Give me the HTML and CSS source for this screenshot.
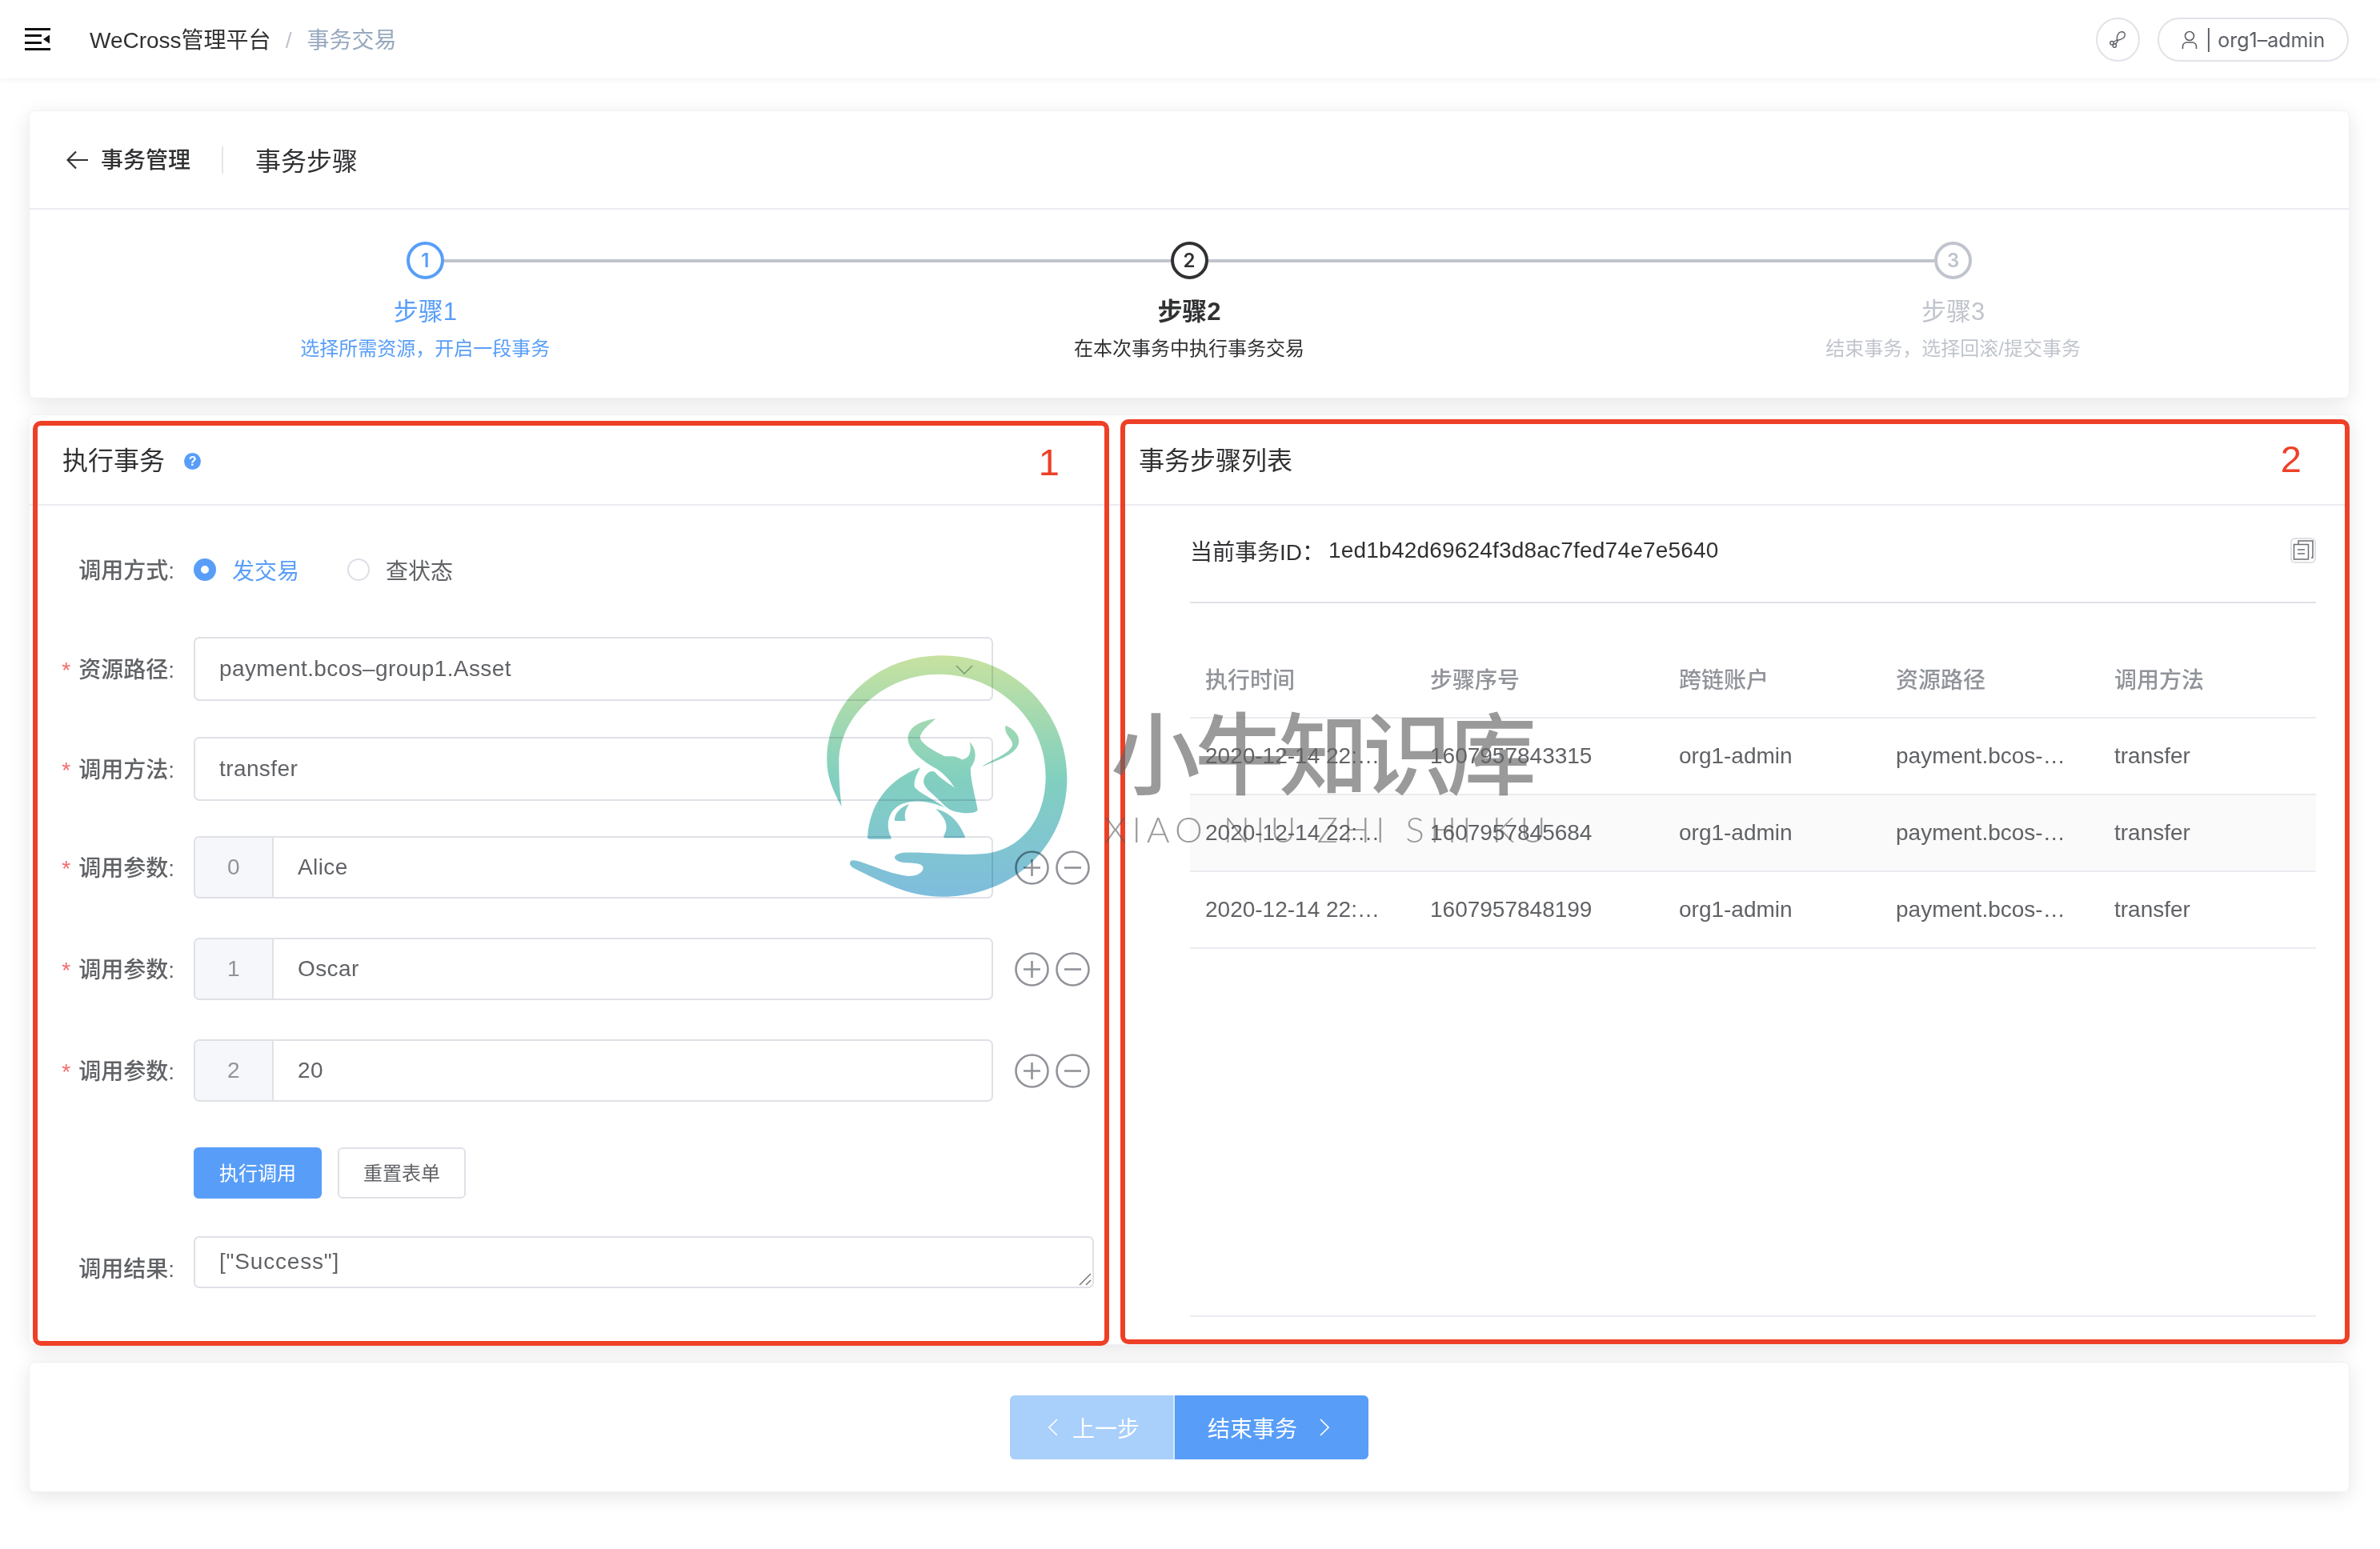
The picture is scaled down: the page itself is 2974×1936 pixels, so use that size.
FILE: index.html
```html
<!DOCTYPE html>
<html>
<head>
  <title>WeCross管理平台</title>
  <link rel="stylesheet" href="styles.css">
</head>
<body>
  <header class="topbar">
    <svg class="menu-icon" width="32" height="28" viewBox="0 0 32 28">
      <path d="M0 0h32v3H0zM0 8h21v3H0zM0 17h21v3H0zM0 25h32v3H0z" fill="#111"/>
      <path d="M31 8.500v11l-8-5.500z" fill="#111"/>
    </svg>
    <div class="crumb">WeCross管理平台<span class="crumb-sep">/</span><span class="crumb-now">事务交易</span></div>
    <div class="topbar-right">
      <button class="tool-btn">
        <svg width="24" height="24" viewBox="0 0 24 24" fill="none" stroke="#5c5f66" stroke-width="1.4">
          <path d="M10.500 13.500C10 10 10.500 6.500 13 4C15 2 18.500 2.500 19.800 4.300C21 6.500 20 9.500 17.500 11C15.500 12.500 13 13 10.500 13.500Z"/>
          <path d="M11 12.500L6 15.500M11.500 14L8.500 18"/>
          <circle cx="4" cy="16.700" r="2.200"/>
          <circle cx="7.300" cy="20" r="2.200"/>
        </svg>
      </button>
      <button class="user-btn">
        <svg width="20" height="24" viewBox="0 0 20 24" fill="none" stroke="#5c5f66" stroke-width="1.6">
          <circle cx="10" cy="7" r="5.500"/>
          <path d="M1.500 23v-3a5 5 0 0 1 5-5h7a5 5 0 0 1 5 5v3"/>
        </svg>
        <span>| org1–admin</span>
      </button>
    </div>
  </header>

  <main class="content">
    <section class="card">
      <div class="page-head">
        <svg class="back-icon" width="28" height="24" viewBox="0 0 28 24" fill="none" stroke="#333" stroke-width="2.2">
          <path d="M27 12H2M12 1.500L1.500 12 12 22.500"/>
        </svg>
        <span class="page-back">事务管理</span>
        <span class="page-title">事务步骤</span>
      </div>
      <div class="steps">
        <div class="step step-done">
          <div class="step-head"><i class="step-line line-none"></i><b class="step-num">1</b><i class="step-line"></i></div>
          <div class="step-title">步骤1</div>
          <div class="step-desc">选择所需资源&#xFF0C;开启一段事务</div>
        </div>
        <div class="step step-now">
          <div class="step-head"><i class="step-line"></i><b class="step-num">2</b><i class="step-line"></i></div>
          <div class="step-title">步骤2</div>
          <div class="step-desc">在本次事务中执行事务交易</div>
        </div>
        <div class="step step-todo">
          <div class="step-head"><i class="step-line"></i><b class="step-num">3</b><i class="step-line line-none"></i></div>
          <div class="step-title">步骤3</div>
          <div class="step-desc">结束事务&#xFF0C;选择回滚/提交事务</div>
        </div>
      </div>
    </section>

    <section class="card panels">
      <div class="panel-left">
        <div class="panel-head">
          <span class="panel-title">执行事务</span>
          <span class="help-icon">?</span>
        </div>
        <div class="form">
          <div class="row row-radio">
            <label class="row-label">调用方式:</label>
            <span class="radio radio-on"></span><span class="radio-text radio-text-on">发交易</span>
            <span class="radio"></span><span class="radio-text">查状态</span>
          </div>
          <div class="row">
            <label class="row-label req">资源路径:</label>
            <div class="input">payment.bcos–group1.Asset
              <svg class="chevron" width="22" height="12" viewBox="0 0 22 12" fill="none" stroke="#a9adb5" stroke-width="1.5"><path d="M1 1l10 10L21 1"/></svg>
            </div>
          </div>
          <div class="row row-last">
            <label class="row-label req">调用方法:</label>
            <div class="input">transfer</div>
          </div>
          <div class="row row-param">
            <label class="row-label req">调用参数:</label>
            <div class="input input-pre"><span class="pre">0</span><span class="val">Alice</span></div>
            <svg class="round-icon" viewBox="0 0 43 43"><circle cx="21.500" cy="21.500" r="20"/><path d="M21.500 11v21M11 21.500h21"/></svg>
            <svg class="round-icon" viewBox="0 0 43 43"><circle cx="21.500" cy="21.500" r="20"/><path d="M11 21.500h21"/></svg>
          </div>
          <div class="row row-param">
            <label class="row-label req">调用参数:</label>
            <div class="input input-pre"><span class="pre">1</span><span class="val">Oscar</span></div>
            <svg class="round-icon" viewBox="0 0 43 43"><circle cx="21.500" cy="21.500" r="20"/><path d="M21.500 11v21M11 21.500h21"/></svg>
            <svg class="round-icon" viewBox="0 0 43 43"><circle cx="21.500" cy="21.500" r="20"/><path d="M11 21.500h21"/></svg>
          </div>
          <div class="row row-param row-param-end">
            <label class="row-label req">调用参数:</label>
            <div class="input input-pre"><span class="pre">2</span><span class="val">20</span></div>
            <svg class="round-icon" viewBox="0 0 43 43"><circle cx="21.500" cy="21.500" r="20"/><path d="M21.500 11v21M11 21.500h21"/></svg>
            <svg class="round-icon" viewBox="0 0 43 43"><circle cx="21.500" cy="21.500" r="20"/><path d="M11 21.500h21"/></svg>
          </div>
          <div class="row-btns">
            <button class="btn btn-primary">执行调用</button>
            <button class="btn">重置表单</button>
          </div>
          <div class="row row-result">
            <label class="row-label">调用结果:</label>
            <div class="textarea">["Success"]
              <svg class="resize" width="16" height="16" viewBox="0 0 16 16" fill="none" stroke="#666" stroke-width="1.2"><path d="M1 15L15 1M9 15l6-6"/></svg>
            </div>
          </div>
        </div>
      </div>

      <div class="panel-right">
        <div class="panel-head">
          <span class="panel-title">事务步骤列表</span>
        </div>
        <div class="panel-body">
          <div class="tx-id">
            <span class="tx-label">当前事务ID&#xFF1A;</span>
            <span class="tx-value">1ed1b42d69624f3d8ac7fed74e7e5640</span>
            <svg class="copy-icon" width="32" height="32" viewBox="0 0 32 32" fill="none">
              <rect x="1" y="1" width="30" height="30" rx="5" stroke="#dfdfe6" stroke-width="2"/>
              <path d="M10 8V4h18v21h-2" stroke="#6a6d73" stroke-width="1.500"/>
              <rect x="4.500" y="8.500" width="18" height="18.500" stroke="#6a6d73" stroke-width="1.500"/>
              <path d="M9 15h9M9 20h9" stroke="#6a6d73" stroke-width="1.500"/>
            </svg>
          </div>
          <div class="table-wrap">
            <table class="steps-table">
              <thead>
                <tr><th>执行时间</th><th>步骤序号</th><th>跨链账户</th><th>资源路径</th><th>调用方法</th></tr>
              </thead>
              <tbody>
                <tr><td>2020-12-14 22:…</td><td>1607957843315</td><td>org1-admin</td><td>payment.bcos-…</td><td>transfer</td></tr>
                <tr class="row-hover"><td>2020-12-14 22:…</td><td>1607957845684</td><td>org1-admin</td><td>payment.bcos-…</td><td>transfer</td></tr>
                <tr><td>2020-12-14 22:…</td><td>1607957848199</td><td>org1-admin</td><td>payment.bcos-…</td><td>transfer</td></tr>
              </tbody>
            </table>
          </div>
        </div>
      </div>

      <!-- red annotation boxes drawn over the screenshot -->
      <div class="mark mark-left"><span class="mark-num">1</span></div>
      <div class="mark mark-right"><span class="mark-num">2</span></div>
    </section>

    <section class="card footer-card">
      <button class="nav-btn nav-prev">
        <svg width="12" height="22" viewBox="0 0 12 22" fill="none" stroke="#fff" stroke-width="1.600"><path d="M11 1L1 11l10 10"/></svg>
        上一步
      </button>
      <button class="nav-btn nav-next">
        结束事务
        <svg width="12" height="22" viewBox="0 0 12 22" fill="none" stroke="#fff" stroke-width="1.600"><path d="M1 1l10 10L1 21"/></svg>
      </button>
    </section>
  </main>

  <!-- site watermark stamped on top of the page -->
  <div class="watermark">
    <svg class="wm-logo" width="330" height="320" viewBox="0 0 990 960">
      <defs>
        <linearGradient id="wmGrad" gradientUnits="userSpaceOnUse" x1="0" y1="28" x2="0" y2="932">
          <stop offset="0" stop-color="#c7e2a0"/>
          <stop offset="0.5" stop-color="#82d0bf"/>
          <stop offset="1" stop-color="#7fbddd"/>
        </linearGradient>
      </defs>
      <g fill="url(#wmGrad)">
        <path d="M95 595C60 530 38 480 40 410C45 200 230 28 470 28C730 28 940 230 940 490C940 740 740 932 470 932C360 932 280 895 140 825C122 815 122 800 135 796C160 790 260 845 345 855C385 855 405 835 400 820C390 800 340 810 310 800C285 790 290 775 320 768C400 762 520 780 620 772C770 760 860 640 860 480C860 270 680 98 460 98C260 98 85 250 85 430C85 490 88 540 95 595Z"/>
        <path d="M448 265C395 272 340 295 344 345C348 385 400 425 450 452C490 478 510 510 520 525C495 505 465 490 445 465C430 455 405 470 402 500C405 530 440 545 480 590L500 605C530 620 590 625 605 608C600 570 580 510 578 450C600 420 605 385 575 352C585 395 570 415 545 418C520 400 500 408 480 405C440 385 375 350 392 325C400 305 425 285 448 265Z"/>
        <path d="M390 448C300 480 200 560 192 710Q192 716 200 716L276 716Q284 716 280 708C260 670 265 610 320 585C370 565 430 575 482 598C440 565 385 545 368 520C365 490 380 470 390 448Z"/>
        <path d="M348 585C320 595 295 615 293 645Q293 648 298 648L335 648C328 620 335 605 348 585Z"/>
        <path d="M447 603C500 615 535 650 558 708Q558 712 552 712L484 712Q476 712 478 704C490 680 500 650 447 603Z"/>
        <path d="M710 290C745 305 765 330 758 360C745 400 680 420 620 445C660 415 720 400 735 365C740 340 700 325 710 290Z"/>
      </g>
    </svg>
    <div class="wm-cn">小牛知识库</div>
    <div class="wm-en">XIAO NIU ZHI SHI KU</div>
  </div>
</body>
</html>
```

FILE: styles.css
```css
* {
  box-sizing: border-box;
}

html {
  height: 100%;
}

body {
  margin: 0;
  min-height: 100%;
  background: #fff;
  font-family: "Liberation Sans", "Noto Sans CJK SC", sans-serif;
  font-size: 28px;
  color: #606266;
}

button {
  font-family: inherit;
  cursor: pointer;
}

/* top bar */
.topbar {
  height: 98px;
  display: flex;
  align-items: center;
  padding: 0 39px 0 31px;
  background: #fff;
  box-shadow: 0 1px 8px rgba(0, 0, 0, 0.06);
}

.menu-icon {
  flex-shrink: 0;
}

.crumb {
  margin: 0 0 2px 49px;
  color: #303133;
  font-size: 28px;
}

.crumb-sep {
  margin: 0 19px 0 18px;
  color: #c0c4cc;
}

.crumb-now {
  color: #97a8be;
}

.topbar-right {
  margin-left: auto;
  display: flex;
  gap: 22px;
}

.tool-btn {
  width: 55px;
  height: 55px;
  padding: 0;
  border: 2px solid #e2e2e9;
  border-radius: 50%;
  background: #fff;
  display: flex;
  align-items: center;
  justify-content: center;
}

.user-btn {
  width: 239px;
  height: 55px;
  padding: 2px 0 0;
  border: 2px solid #e2e2e9;
  border-radius: 28px;
  background: #fff;
  display: flex;
  align-items: center;
  justify-content: center;
  gap: 10px;
  font-family: Inter, sans-serif;
  font-size: 25px;
  color: #5c5f66;
}

/* cards */
.content {
  padding: 41px 39px 0 37px;
}

.card {
  background: #fff;
  border-radius: 6px;
  box-shadow: 0 0 0 1px #f1f1f6, 0 6px 26px rgba(0, 0, 0, 0.11);
}

.page-head {
  height: 123px;
  display: flex;
  align-items: center;
  padding-left: 46px;
  border-bottom: 2px solid #ebebf1;
}

.page-back {
  margin-left: 15px;
  padding: 2px 39px 0 0;
  border-right: 2px solid #e6e6ea;
  line-height: 32px;
  color: #303133;
  font-weight: 500;
}

.page-title {
  margin: 0 0 2px 40px;
  font-size: 32px;
  color: #303133;
}

/* steps */
.steps {
  display: flex;
  height: 235px;
  padding: 40px 17px 0;
}

.step {
  flex: 1;
  text-align: center;
}

.step-head {
  display: flex;
  align-items: center;
}

.step-line {
  flex: 1;
  height: 4px;
  background: #c0c4cc;
}

.line-none {
  background: none;
}

.step-num {
  width: 47px;
  height: 47px;
  border: 4px solid currentColor;
  border-radius: 50%;
  font-family: Inter, sans-serif;
  font-size: 24px;
  font-weight: 600;
  line-height: 39px;
}

.step-title {
  margin-top: 19px;
  font-size: 31px;
  line-height: 44px;
}

.step-desc {
  margin-top: 6px;
  font-size: 24px;
  line-height: 36px;
}

.step-done {
  color: #589ef8;
}

.step-now {
  color: #303133;
}

.step-now .step-title {
  font-weight: 700;
}

.step-todo {
  color: #c0c4cc;
}

/* two panels */
.panels {
  position: relative;
  height: 1161px;
  margin-top: 22px;
  display: grid;
  grid-template-columns: 1363px 1fr;
}

.panel-head {
  height: 113px;
  display: flex;
  align-items: center;
  padding-bottom: 3px;
  border-bottom: 2px solid #ebebf1;
}

.panel-left .panel-head {
  padding-left: 41px;
}

.panel-right .panel-head {
  padding-left: 23px;
}

.panel-title {
  font-size: 32px;
  color: #303133;
}

.help-icon {
  width: 21px;
  height: 21px;
  margin: 7px 0 0 24px;
  border-radius: 50%;
  background: #589ef8;
  color: #fff;
  font-size: 16px;
  font-weight: 700;
  line-height: 21px;
  text-align: center;
}

/* form */
.form {
  padding-top: 40px;
}

.row {
  display: flex;
  align-items: center;
  margin-bottom: 45px;
}

.row-last {
  margin-bottom: 44px;
}

.row-label {
  width: 205px;
  flex-shrink: 0;
  margin-bottom: 2px;
  padding-right: 24px;
  text-align: right;
  font-weight: 500;
  white-space: nowrap;
}

.req::before {
  content: "*";
  margin-right: 10px;
  color: #f56c6c;
}

.row-radio {
  height: 80px;
  margin-bottom: 44px;
}

.radio {
  width: 28px;
  height: 28px;
  border: 2px solid #dcdfe6;
  border-radius: 50%;
  background: #fff;
}

.radio-on {
  border: 9px solid #589ef8;
}

.radio-text {
  margin-left: 20px;
  margin-right: 60px;
}

.radio-text-on {
  color: #589ef8;
}

.input {
  position: relative;
  width: 999px;
  height: 80px;
  padding: 0 30px;
  display: flex;
  align-items: center;
  border: 2px solid #e0e0e7;
  border-radius: 7px;
  background: #fff;
  letter-spacing: 0.4px;
}

.chevron {
  position: absolute;
  right: 23px;
  top: 33px;
}

.row-param {
  margin-bottom: 49px;
}

.row-param .input {
  height: 78px;
}

.row-param-end {
  margin-bottom: 57px;
}

.input-pre {
  padding: 0;
}

.pre {
  width: 98px;
  height: 100%;
  flex-shrink: 0;
  display: flex;
  align-items: center;
  justify-content: center;
  background: #f5f7fa;
  border-right: 2px solid #e0e0e7;
  border-radius: 6px 0 0 6px;
  color: #909399;
}

.val {
  padding-left: 30px;
}

.round-icon {
  width: 43px;
  height: 43px;
  margin-left: 8px;
  fill: none;
  stroke: #909399;
  stroke-width: 2.6;
}

.input + .round-icon {
  margin-left: 27px;
}

.row-btns {
  display: flex;
  gap: 20px;
  padding-left: 205px;
  margin-bottom: 47px;
}

.btn {
  width: 160px;
  height: 64px;
  padding: 0 0 3px;
  border: 2px solid #e0e0e7;
  border-radius: 6px;
  background: #fff;
  color: #606266;
  font-size: 24px;
}

.btn-primary {
  border-color: #589ef8;
  background: #589ef8;
  color: #fff;
}

.textarea {
  position: relative;
  width: 1125px;
  height: 65px;
  padding: 10px 30px;
  border: 2px solid #e0e0e7;
  border-radius: 7px;
  line-height: 40px;
  letter-spacing: 0.8px;
}

.row-result .row-label {
  margin: 12px 0 0;
}

.resize {
  position: absolute;
  right: 1px;
  bottom: 1px;
}

/* right panel */
.panel-body {
  padding: 0 41px 0 87px;
}

.tx-id {
  height: 122px;
  padding-bottom: 8px;
  display: flex;
  align-items: center;
  border-bottom: 2px solid #e0e0e7;
  color: #303133;
}

.tx-value {
  margin-left: 5px;
  letter-spacing: 0.2px;
}

.copy-icon {
  margin-left: auto;
}

.table-wrap {
  height: 892px;
  border-bottom: 2px solid #ebebf1;
}

.steps-table {
  width: 100%;
  border-collapse: collapse;
  table-layout: fixed;
}

.steps-table th {
  height: 143px;
  padding: 46px 0 0 19px;
  border-bottom: 2px solid #ebebf1;
  color: #909399;
  font-weight: 500;
  text-align: left;
}

.steps-table td {
  height: 96px;
  padding-left: 19px;
  border-bottom: 2px solid #ebebf1;
  white-space: nowrap;
}

.steps-table th:nth-child(1) { width: 281px; }
.steps-table th:nth-child(2) { width: 311px; }
.steps-table th:nth-child(3) { width: 271px; }
.steps-table th:nth-child(4) { width: 273px; }

.row-hover td {
  background: #fafafa;
}

/* footer */
.footer-card {
  height: 161px;
  margin-top: 23px;
  display: flex;
  align-items: center;
  justify-content: center;
}

.nav-btn {
  height: 80px;
  display: flex;
  align-items: center;
  justify-content: center;
  padding: 0;
  border: 0;
  color: #fff;
  font-size: 28px;
}

.nav-prev {
  width: 206px;
  gap: 18px;
  padding-left: 6px;
  border-right: 2px solid #d3e6fd;
  border-radius: 6px 0 0 6px;
  background: #a9cffb;
}

.nav-next {
  width: 242px;
  gap: 28px;
  padding-right: 8px;
  border-radius: 0 6px 6px 0;
  background: #589ef8;
}

/* red annotation boxes */
.mark {
  position: absolute;
  border: 6px solid #ee4027;
  border-radius: 10px;
  pointer-events: none;
}

.mark-left {
  left: 4px;
  top: 7px;
  width: 1345px;
  height: 1156px;
}

.mark-right {
  left: 1363px;
  top: 5px;
  width: 1536px;
  height: 1156px;
}

.mark-num {
  position: absolute;
  color: #ee4027;
  font-size: 47px;
  line-height: 54px;
}

.mark-left .mark-num {
  right: 56px;
  top: 19px;
}

.mark-right .mark-num {
  right: 54px;
  top: 17px;
}

/* watermark */
.watermark {
  pointer-events: none;
}

.wm-logo {
  position: absolute;
  left: 1020px;
  top: 810px;
  mix-blend-mode: multiply;
}

.wm-cn {
  position: absolute;
  left: 1388px;
  top: 861px;
  font-family: "Noto Sans CJK SC", sans-serif;
  font-size: 112px;
  font-weight: 500;
  line-height: 150px;
  letter-spacing: -7px;
  color: rgba(100, 100, 100, 0.65);
  white-space: nowrap;
}

.wm-en {
  position: absolute;
  left: 1380px;
  top: 1010px;
  font-family: Lato, sans-serif;
  font-weight: 300;
  font-size: 44px;
  line-height: 52px;
  letter-spacing: 7px;
  color: rgba(90, 90, 90, 0.6);
  white-space: nowrap;
}
```
